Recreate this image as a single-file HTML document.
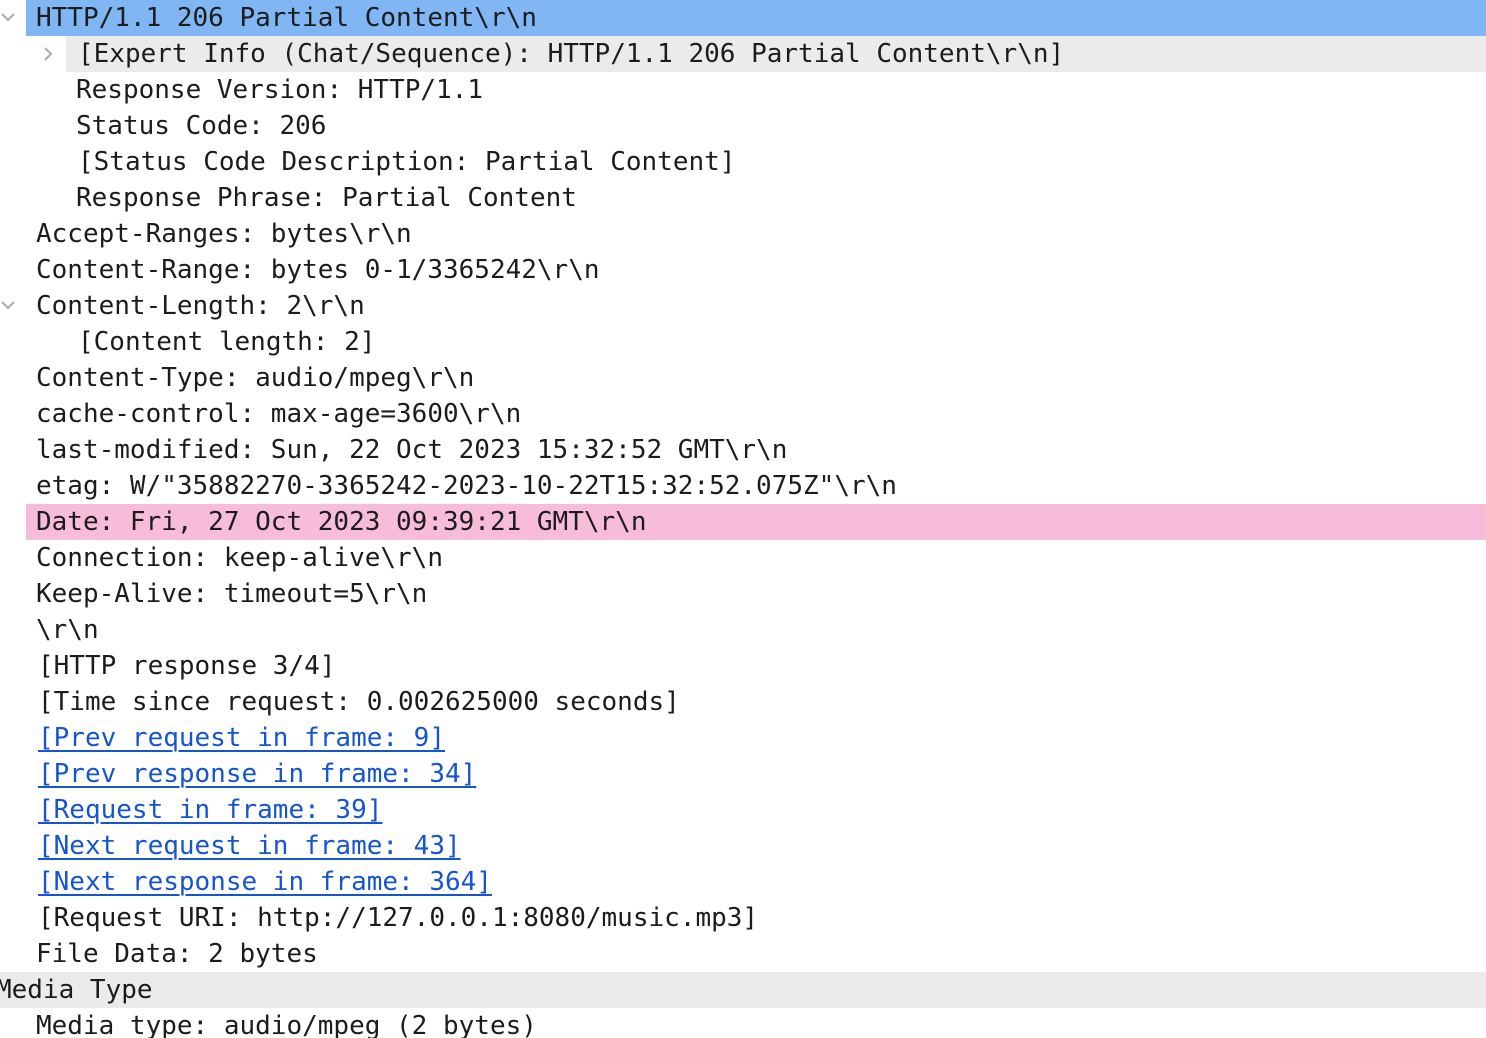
<!DOCTYPE html>
<html><head><meta charset="utf-8"><style>
html,body{margin:0;padding:0;background:#fff;width:1486px;height:1038px;overflow:hidden}
body{position:relative;font-family:"DejaVu Sans Mono","Liberation Mono",monospace;font-size:26px;color:#1c1c1c}
.r{position:absolute;left:0;right:0;height:36px;line-height:36px;white-space:pre}
.t{position:absolute;top:0}
.bg{position:absolute;top:0;bottom:0;right:0}
a{color:#1555d0;text-decoration:underline;text-decoration-thickness:2px;text-underline-offset:4px}
.chev{position:absolute;top:10px;width:16px;height:16px}
</style></head><body>

<div class="r" style="top:0"><div class="bg" style="left:26px;background:#80b6f4"></div>
<svg class="chev" style="left:0;top:9px" viewBox="0 0 16 16"><path d="M2 5 L8 11 L14 5" fill="none" stroke="#aaa" stroke-width="2"/></svg>
<span class="t" style="left:36px">HTTP/1.1 206 Partial Content\r\n</span></div>

<div class="r" style="top:36px"><div class="bg" style="left:66px;background:#ebebeb"></div>
<svg class="chev" style="left:40px" viewBox="0 0 16 16"><path d="M5 2 L11 8 L5 14" fill="none" stroke="#aaa" stroke-width="2"/></svg>
<span class="t" style="left:78px">[Expert Info (Chat/Sequence): HTTP/1.1 206 Partial Content\r\n]</span></div>

<div class="r" style="top:72px"><span class="t" style="left:76px">Response Version: HTTP/1.1</span></div>
<div class="r" style="top:108px"><span class="t" style="left:76px">Status Code: 206</span></div>
<div class="r" style="top:144px"><span class="t" style="left:78px">[Status Code Description: Partial Content]</span></div>
<div class="r" style="top:180px"><span class="t" style="left:76px">Response Phrase: Partial Content</span></div>
<div class="r" style="top:216px"><span class="t" style="left:36px">Accept-Ranges: bytes\r\n</span></div>
<div class="r" style="top:252px"><span class="t" style="left:36px">Content-Range: bytes 0-1/3365242\r\n</span></div>
<div class="r" style="top:288px">
<svg class="chev" style="left:0;top:9px" viewBox="0 0 16 16"><path d="M2 5 L8 11 L14 5" fill="none" stroke="#aaa" stroke-width="2"/></svg>
<span class="t" style="left:36px">Content-Length: 2\r\n</span></div>
<div class="r" style="top:324px"><span class="t" style="left:78px">[Content length: 2]</span></div>
<div class="r" style="top:360px"><span class="t" style="left:36px">Content-Type: audio/mpeg\r\n</span></div>
<div class="r" style="top:396px"><span class="t" style="left:36px">cache-control: max-age=3600\r\n</span></div>
<div class="r" style="top:432px"><span class="t" style="left:36px">last-modified: Sun, 22 Oct 2023 15:32:52 GMT\r\n</span></div>
<div class="r" style="top:468px"><span class="t" style="left:36px">etag: W/"35882270-3365242-2023-10-22T15:32:52.075Z"\r\n</span></div>
<div class="r" style="top:504px"><div class="bg" style="left:26px;background:#f7bcd9"></div><span class="t" style="left:36px">Date: Fri, 27 Oct 2023 09:39:21 GMT\r\n</span></div>
<div class="r" style="top:540px"><span class="t" style="left:36px">Connection: keep-alive\r\n</span></div>
<div class="r" style="top:576px"><span class="t" style="left:36px">Keep-Alive: timeout=5\r\n</span></div>
<div class="r" style="top:612px"><span class="t" style="left:36px">\r\n</span></div>
<div class="r" style="top:648px"><span class="t" style="left:38px">[HTTP response 3/4]</span></div>
<div class="r" style="top:684px"><span class="t" style="left:38px">[Time since request: 0.002625000 seconds]</span></div>
<div class="r" style="top:720px"><span class="t" style="left:38px"><a>[Prev request in frame: 9]</a></span></div>
<div class="r" style="top:756px"><span class="t" style="left:38px"><a>[Prev response in frame: 34]</a></span></div>
<div class="r" style="top:792px"><span class="t" style="left:38px"><a>[Request in frame: 39]</a></span></div>
<div class="r" style="top:828px"><span class="t" style="left:38px"><a>[Next request in frame: 43]</a></span></div>
<div class="r" style="top:864px"><span class="t" style="left:38px"><a>[Next response in frame: 364]</a></span></div>
<div class="r" style="top:900px"><span class="t" style="left:38px">[Request URI: http://127.0.0.1:8080/music.mp3]</span></div>
<div class="r" style="top:936px"><span class="t" style="left:36px">File Data: 2 bytes</span></div>
<div class="r" style="top:972px"><div class="bg" style="left:0;background:#ebebeb"></div><span class="t" style="left:-4px">Media Type</span></div>
<div class="r" style="top:1008px"><span class="t" style="left:36px">Media type: audio/mpeg (2 bytes)</span></div>
</body></html>
